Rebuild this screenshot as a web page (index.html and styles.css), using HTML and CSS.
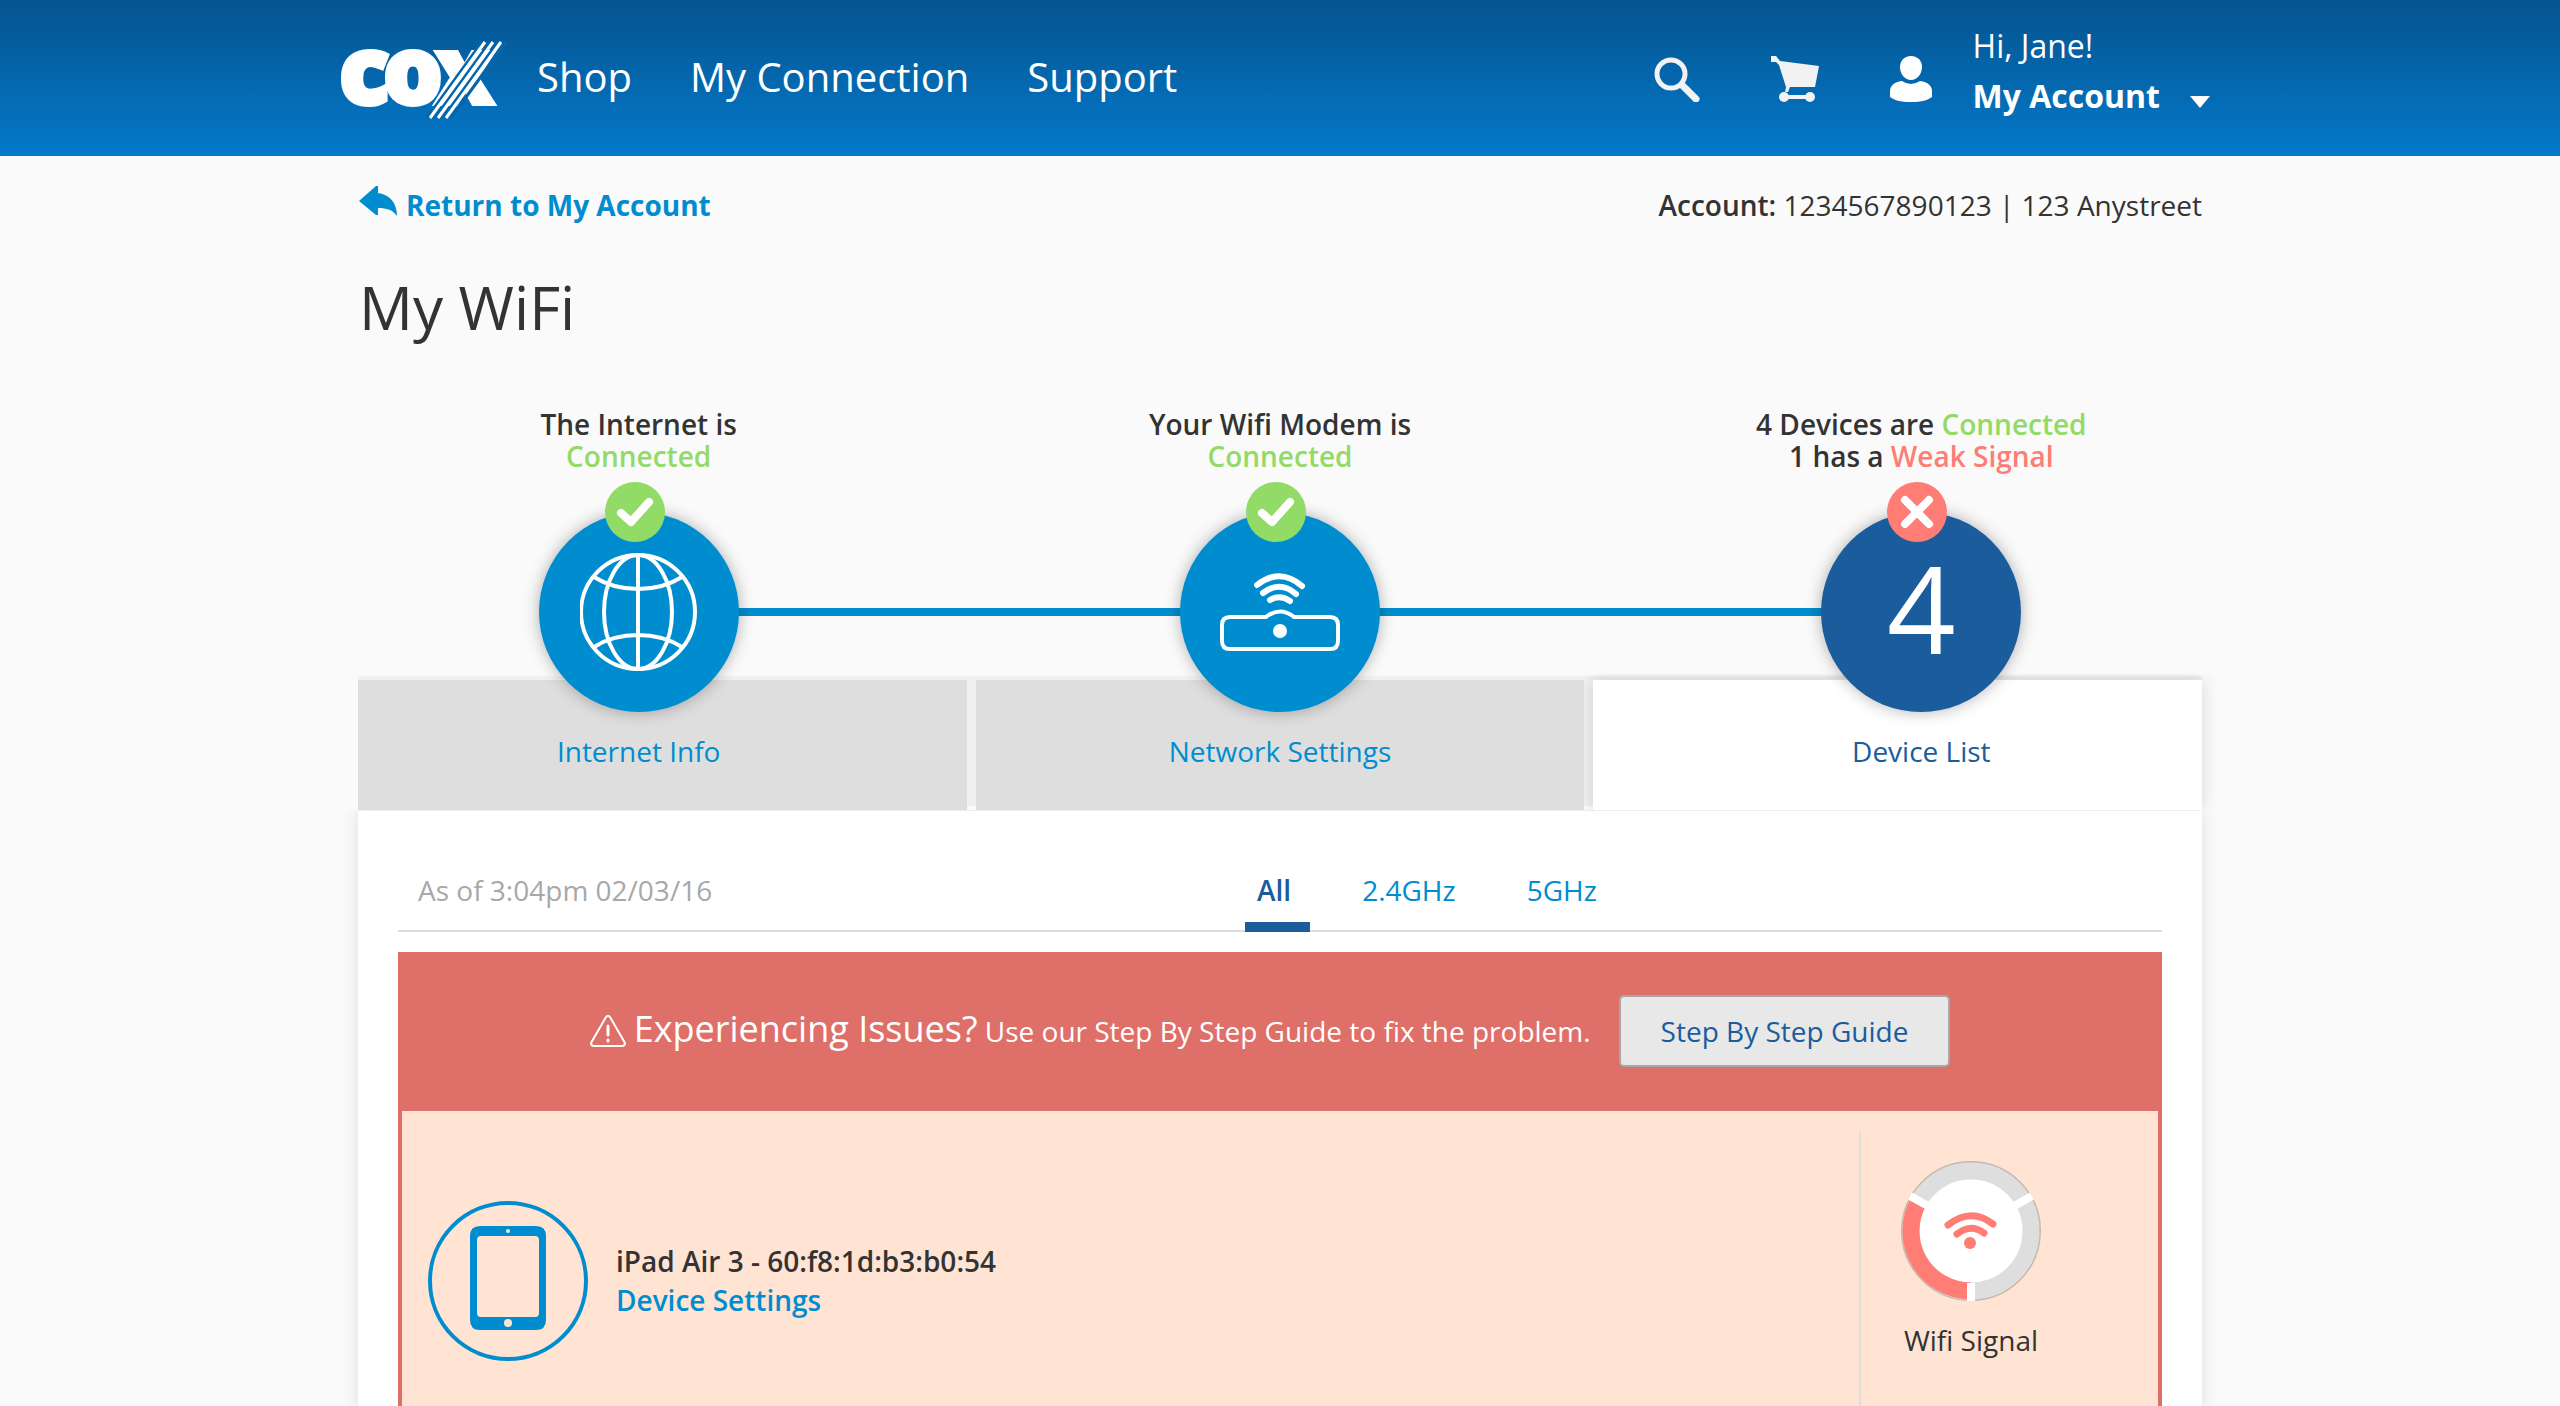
FILE: index.html
```html
<!DOCTYPE html>
<html lang="en">
<head>
<meta charset="utf-8">
<meta name="viewport" content="width=device-width, initial-scale=1">
<title>My WiFi</title>
<link rel="stylesheet" href="styles.css">
</head>
<body>
<header class="site-header">
  <div class="header-inner">
    <a class="logo" href="#">
      <svg width="164" height="76" viewBox="0 0 164 76" role="img">
        <text class="logo-text" x="-1 43 95" y="62">cox</text>
        <g class="logo-gap">
          <path d="M142 0L87 76M150 0L95 76M158 0L103 76M166 0L111 76"/>
        </g>
        <g class="logo-slash">
          <path d="M145 0L90 76M153 0L98 76M161 0L106 76"/>
        </g>
      </svg>
    </a>
    <nav class="main-nav">
      <a href="#">Shop</a>
      <a href="#">My Connection</a>
      <a href="#">Support</a>
    </nav>
    <div class="tools">
      <button class="icon-button" type="button" aria-label="Search">
        <svg width="46" height="46" viewBox="0 0 46 46"><circle cx="17" cy="18" r="14" fill="none" stroke="#f2f2f2" stroke-width="5"/><path d="M28 29L42 43" stroke="#f2f2f2" stroke-width="7" stroke-linecap="round"/></svg>
      </button>
      <button class="icon-button" type="button" aria-label="Cart">
        <svg width="48" height="46" viewBox="0 0 48 46"><path d="M0 0H5L9 5L48 10L44 31H19L17 36H14L15 31L8 9L5 6H0Z" fill="#f2f2f2"/><path d="M12 41H40" stroke="#f2f2f2" stroke-width="4"/><circle cx="13" cy="41" r="5" fill="#f2f2f2"/><circle cx="39" cy="41" r="5" fill="#f2f2f2"/></svg>
      </button>
      <button class="account-menu" type="button">
        <svg width="42" height="46" viewBox="0 0 42 46"><path d="M21 0C28 0 32 5 32 11C32 18 27 24 21 24C15 24 10 18 10 11C10 5 14 0 21 0Z" fill="#fff"/><path d="M12 25Q21 31 30 25C38 26 42 30 42 35V41C38 44 32 46 21 46C10 46 4 44 0 41V35C0 30 4 26 12 25Z" fill="#fff"/></svg>
        <span class="account-text">
          <span>Hi, Jane!</span>
          <strong>My Account</strong>
        </span>
        <svg class="caret" width="20" height="12" viewBox="0 0 20 12"><path d="M0 0H20L10 12Z" fill="#fff"/></svg>
      </button>
    </div>
  </div>
</header>

<main class="page">
  <div class="crumbs">
    <a class="back" href="#">
      <svg width="39" height="30" viewBox="0 0 39 30"><path d="M0 15L17 0H19V7C32 9 38 18 38 30C34 24 28 22 19 22V29H17Z" fill="#008dcf"/></svg>
      <span>Return to My Account</span>
    </a>
    <p class="account-line"><b>Account:</b> 1234567890123 | 123 Anystreet</p>
  </div>
  <h1>My WiFi</h1>

  <div class="status">
    <div class="tab-bars">
      <div class="bar"></div>
      <div class="bar"></div>
      <div class="bar bar-active"></div>
    </div>
    <div class="link-line"></div>
    <nav class="steps">
      <a class="step" href="#">
        <span class="summary">The Internet is<br><span class="good">Connected</span></span>
        <span class="disc">
          <svg width="118" height="118" viewBox="0 0 118 118" fill="none" stroke="#fff" stroke-width="4"><circle cx="58" cy="59" r="57"/><ellipse cx="58" cy="59" rx="34" ry="57"/><path d="M58 2V116M14 24Q33 36 58 36T102 24M14 94Q33 82 58 82T102 94"/></svg>
          <svg class="badge" width="60" height="60" viewBox="0 0 60 60"><circle cx="30" cy="30" r="30" fill="#91db66"/><path d="M16 31L26 40L44 20" fill="none" stroke="#fff" stroke-width="8" stroke-linecap="round" stroke-linejoin="round"/></svg>
        </span>
        <span class="tab-label">Internet Info</span>
      </a>
      <a class="step" href="#">
        <span class="summary">Your Wifi Modem is<br><span class="good">Connected</span></span>
        <span class="disc">
          <svg width="120" height="120" viewBox="0 0 120 120" fill="none" stroke="#fff" stroke-width="4" stroke-linecap="round"><path d="M37 33Q60 15 82 34" stroke-width="6"/><path d="M43 41Q60 28 76 42" stroke-width="6"/><path d="M50 48Q60 42 70 49" stroke-width="6"/><path d="M46 65H10Q2 65 2 73V89Q2 97 10 97H110Q118 97 118 89V73Q118 65 110 65H74Q60 54 46 65Z"/><circle cx="60" cy="79" r="7" fill="#fff" stroke="none"/></svg>
          <svg class="badge" width="60" height="60" viewBox="0 0 60 60"><circle cx="30" cy="30" r="30" fill="#91db66"/><path d="M16 31L26 40L44 20" fill="none" stroke="#fff" stroke-width="8" stroke-linecap="round" stroke-linejoin="round"/></svg>
        </span>
        <span class="tab-label">Network Settings</span>
      </a>
      <a class="step step-active" href="#" aria-current="page">
        <span class="summary">4 Devices are <span class="good">Connected</span><br>1 has a <span class="bad">Weak Signal</span></span>
        <span class="disc">
          <span class="count">4</span>
          <svg class="badge" width="60" height="60" viewBox="0 0 60 60"><circle cx="30" cy="30" r="30" fill="#ff7d75"/><path d="M18 18L42 42M42 18L18 42" fill="none" stroke="#fff" stroke-width="8" stroke-linecap="round"/></svg>
        </span>
        <span class="tab-label">Device List</span>
      </a>
    </nav>
  </div>

  <section class="panel">
    <div class="filter-row">
      <p class="as-of">As of 3:04pm 02/03/16</p>
      <nav class="filters">
        <a class="filter filter-on" href="#">All</a>
        <a class="filter" href="#">2.4GHz</a>
        <a class="filter" href="#">5GHz</a>
      </nav>
    </div>
    <div class="issue">
      <div class="alert">
        <svg class="warn" width="36" height="32" viewBox="0 0 36 32" fill="none" stroke="#fff" stroke-width="2" stroke-linejoin="round" stroke-linecap="round"><path d="M16 2Q18 0 20 2L35 28Q35 31 32 31H4Q1 31 1 28Z"/><path d="M18 11V20M18 25V26" stroke-width="3"/></svg>
        <p class="alert-text"><span class="alert-title">Experiencing Issues?</span> <span class="alert-body">Use our Step By Step Guide to fix the problem.</span></p>
        <button class="guide" type="button">Step By Step Guide</button>
      </div>
      <div class="device">
        <svg class="device-icon" width="160" height="160" viewBox="0 0 160 160"><circle cx="80" cy="80" r="78" fill="none" stroke="#008dcf" stroke-width="4"/><path fill="#008dcf" fill-rule="evenodd" d="M52 25H108Q118 25 118 35V119Q118 129 108 129H52Q42 129 42 119V35Q42 25 52 25ZM53 35Q49 35 49 39V112Q49 116 53 116H107Q111 116 111 112V39Q111 35 107 35Z"/><circle cx="80" cy="30" r="2" fill="#ffe4d3"/><circle cx="80" cy="122" r="4" fill="#ffe4d3"/></svg>
        <div class="device-text">
          <p>iPad Air 3 - 60:f8:1d:b3:b0:54</p>
          <a href="#">Device Settings</a>
        </div>
        <div class="signal">
          <svg width="140" height="140" viewBox="0 0 140 140" fill="none"><circle cx="70" cy="70" r="69" fill="#fff" stroke="#c7b8ae" stroke-width="2"/><circle cx="70" cy="70" r="60" stroke="#dedede" stroke-width="17"/><path d="M70 130A60 60 0 0 1 18 40" stroke="#ff7d75" stroke-width="17"/><path d="M70 122V140M113 45L131 35M27 45L9 35" stroke="#fff" stroke-width="8"/><g stroke="#ff7d75" stroke-width="7" stroke-linecap="round"><path d="M47 64Q70 46 92 63M56 73Q70 62 83 72"/></g><circle cx="69" cy="82" r="6" fill="#ff7d75"/></svg>
          <p>Wifi Signal</p>
        </div>
      </div>
    </div>
  </section>
</main>
</body>
</html>
```
FILE: styles.css
```css
* { box-sizing: border-box; }
body {
  margin: 0;
  min-height: 100vh;
  display: flex;
  flex-direction: column;
  background: #fafafa;
  color: #333;
  font: 28px/38px "Open Sans", "Noto Sans", sans-serif;
}
a { color: #008dcf; text-decoration: none; }
p, h1 { margin: 0; }
button { font: inherit; cursor: pointer; }
svg { display: block; flex: none; }

.site-header { background: linear-gradient(#04548f, #0479cb); }
.header-inner {
  display: flex;
  align-items: flex-start;
  max-width: 1880px;
  min-height: 156px;
  margin: 0 auto;
  padding: 0 10px 0 0;
}
.logo { margin-top: 42px; }
.logo svg { overflow: visible; }
.logo-text { font-size: 94px; font-weight: 800; fill: #fff; stroke: #fff; stroke-width: 4px; }
.logo-gap path { stroke: #0466ab; stroke-width: 3px; }
.logo-slash path { stroke: #fff; stroke-width: 3px; }
.main-nav { display: flex; gap: 58px; padding: 50px 0 0 33px; font-size: 40px; line-height: 54px; }
.main-nav a { color: #fff; }
.tools { display: flex; align-items: flex-start; margin-left: auto; }
.icon-button, .account-menu { border: 0; padding: 0; background: none; color: #fff; }
.icon-button { margin: 56px 71px 0 0; }
.account-menu { display: flex; padding-top: 21px; font-size: 32px; line-height: 50px; text-align: left; }
.account-menu > svg { margin-top: 35px; }
.account-menu .caret { margin: 75px 0 0 30px; }
.account-text { display: flex; flex-direction: column; padding-left: 41px; }

.page {
  flex: 1;
  display: flex;
  flex-direction: column;
  width: 100%;
  max-width: 1844px;
  margin: 0 auto;
}
.crumbs { display: flex; justify-content: space-between; padding-top: 30px; }
.back { display: flex; gap: 8px; padding-left: 1px; font-weight: 700; }
.account-line b { font-weight: 600; }
h1 { margin-top: 43px; padding-left: 1px; font-size: 60px; line-height: 80px; font-weight: 400; }

.status { display: grid; margin-top: 61px; }
.status > * { grid-area: 1 / 1; }
.tab-bars {
  align-self: end;
  display: grid;
  grid-template-columns: repeat(3, 1fr);
  gap: 9px;
  height: 134px;
  padding-top: 4px;
  background: linear-gradient(#f0f0f0, #f0f0f0) no-repeat 0 0 / 100% 130px;
}
.bar { background: #dedede; }
.bar-active { background: #fff; box-shadow: 0 0 16px rgba(0, 0, 0, .15); clip-path: inset(-6px -16px 0 -9px); }
.link-line { height: 8px; margin: 200px 280px 0; background: #008dcf; }
.steps { position: relative; display: grid; grid-template-columns: repeat(3, 1fr); margin: 0 -40px; }
.step { display: flex; flex-direction: column; align-items: center; text-align: center; }
.summary { color: #333; font-weight: 600; line-height: 32px; }
.good { color: #91db66; }
.bad { color: #ff7d75; }
.disc {
  position: relative;
  display: grid;
  place-items: center;
  width: 200px;
  height: 200px;
  margin-top: 40px;
  border-radius: 50%;
  background: #008dcf;
  box-shadow: 0 0 16px rgba(0, 0, 0, .3);
}
.badge { position: absolute; top: -30px; left: 66px; }
.step-active .disc { background: #1b5c9d; }
.count { padding-bottom: 8px; color: #fff; font-size: 120px; line-height: 160px; }
.tab-label { padding: 20px 0 40px; }
.step-active .tab-label { color: #1b5c9d; }

.panel {
  flex: 1;
  display: flex;
  flex-direction: column;
  margin-top: 1px;
  padding: 50px 40px 0;
  background: #fff;
  box-shadow: 0 0 16px rgba(0, 0, 0, .12);
  clip-path: inset(-1px -16px 0);
}
.filter-row { display: flex; padding-left: 20px; border-bottom: 2px solid #dedede; }
.as-of { flex: 0 0 827px; padding-top: 10px; color: #a8a8a8; }
.filters { display: flex; gap: 40px; margin-bottom: -2px; }
.filter { padding: 10px 19px 13px 12px; border-bottom: 10px solid transparent; }
.filter-on { color: #1b5c9d; border-color: #1b5c9d; font-weight: 600; }

.issue {
  flex: 1;
  display: flex;
  flex-direction: column;
  margin-top: 20px;
  border: solid #df6f69;
  border-width: 0 4px;
  background: #ffe4d3;
}
.alert {
  display: flex;
  justify-content: center;
  align-items: center;
  min-height: 159px;
  padding: 0 20px 2px 0;
  background: #df6f69;
  color: #fff;
}
.alert-text { padding: 0 28px 2px 8px; }
.alert-title { font-size: 36px; }
.guide {
  padding: 15px 40px;
  border: 2px solid #a8a8a8;
  border-radius: 5px;
  background: #e8e8e8;
  color: #1b5c9d;
}
.device { flex: 1; display: flex; padding: 20px 0 0 26px; }
.device-icon { margin-top: 70px; }
.device-text { flex: 1; padding: 111px 0 0 28px; font-weight: 600; line-height: 39px; }
.signal {
  flex: 0 0 299px;
  padding: 30px 0 20px 40px;
  border-left: 2px solid #dedede;
}
.signal p { width: 140px; margin-top: 20px; text-align: center; white-space: nowrap; }
```
